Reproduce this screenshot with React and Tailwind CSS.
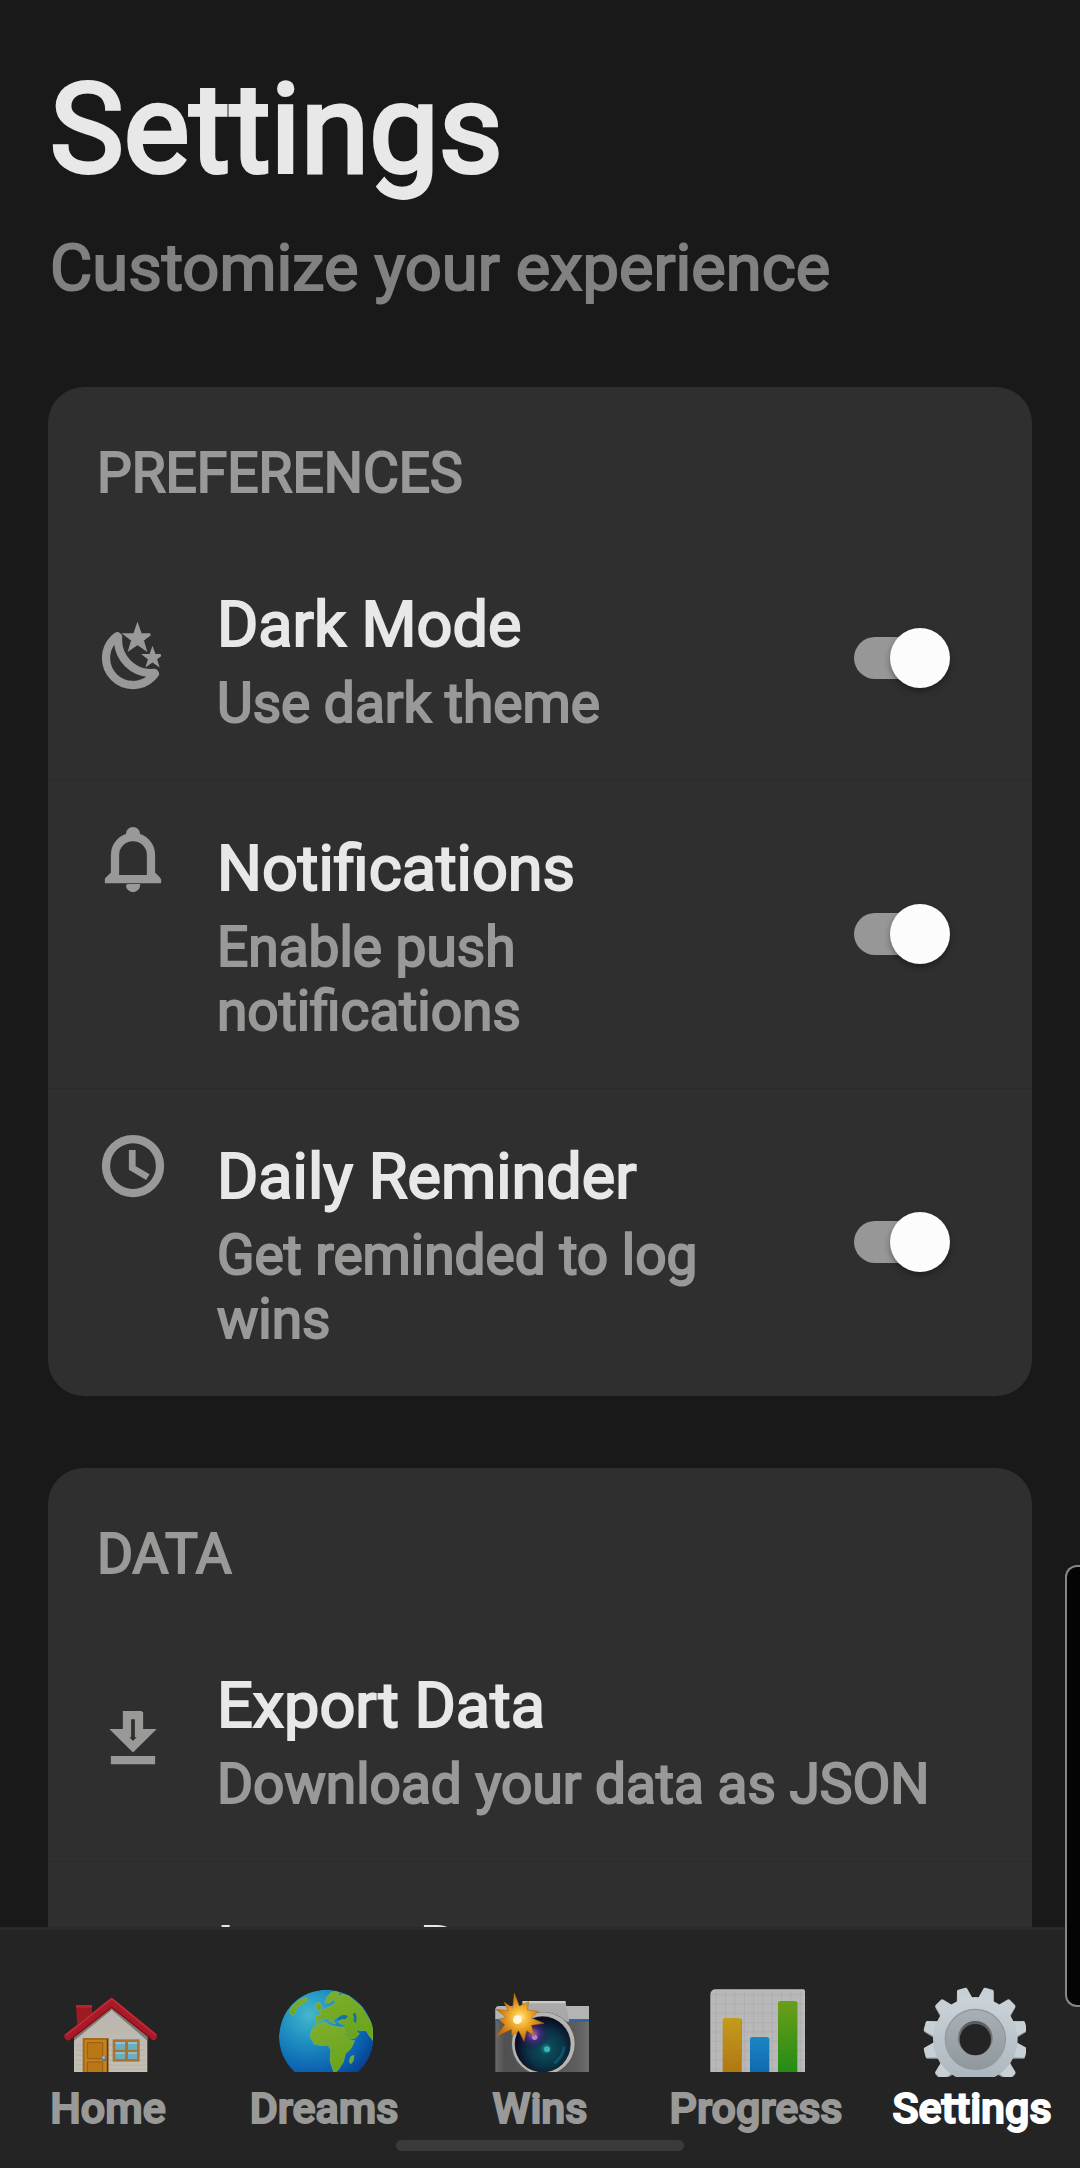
const ICONS = {
  night:
    "M17.75,4.09L15.22,6.03L16.13,9.09L13.5,7.28L10.87,9.09L11.78,6.03L9.25,4.09L12.44,4L13.5,1L14.56,4L17.75,4.09M21.25,11L19.61,12.25L20.2,14.23L18.5,13.06L16.8,14.23L17.39,12.25L15.75,11L17.81,10.95L18.5,9L19.19,10.95L21.25,11M18.97,15.95C19.8,15.87 20.69,17.05 20.16,17.8C19.84,18.25 19.5,18.67 19.08,19.07C15.17,23 8.84,23 4.94,19.07C1.03,15.17 1.03,8.83 4.94,4.93C5.34,4.53 5.76,4.17 6.21,3.85C6.96,3.32 8.14,4.21 8.06,5.04C7.79,7.9 8.75,10.87 10.95,13.06C13.14,15.26 16.1,16.22 18.97,15.95M17.33,17.97C14.5,17.81 11.7,16.64 9.53,14.5C7.36,12.31 6.2,9.5 6.04,6.68C3.23,9.82 3.34,14.64 6.35,17.66C9.37,20.67 14.19,20.78 17.33,17.97Z",
  bell: "M10 21H14C14 22.1 13.1 23 12 23S10 22.1 10 21M21 19V20H3V19L5 17V11C5 7.9 7 5.2 10 4.3V4C10 2.9 10.9 2 12 2S14 2.9 14 4V4.3C17 5.2 19 7.9 19 11V17L21 19M17 11C17 8.2 14.8 6 12 6S7 8.2 7 11V18H17V11Z",
  clock:
    "M12,20A8,8 0 0,0 20,12A8,8 0 0,0 12,4A8,8 0 0,0 4,12A8,8 0 0,0 12,20M12,2A10,10 0 0,1 22,12A10,10 0 0,1 12,22C6.47,22 2,17.5 2,12A10,10 0 0,1 12,2M12.5,7V12.25L17,14.92L16.25,16.15L11,13V7H12.5Z",
  download:
    "M13,5V11H14.17L12,13.17L9.83,11H11V5H13M15,3H9V9H5L12,16L19,9H15V3M19,18H5V20H19V18Z",
  upload:
    "M9,10V16H15V10H19L12,3L5,10H9M12,5.8L14.2,8H13V14H11V8H9.8L12,5.8M19,18H5V20H19V18Z",
};

function RowIcon({ name }) {
  return (
    <svg viewBox="0 0 24 24" aria-hidden="true" className="size-[72px] fill-[#999998] stroke-[#999998]" strokeWidth="0.75">
      <path d={ICONS[name]} />
    </svg>
  );
}

function Switch({ id }) {
  return (
    <span className="relative mr-[82px] flex h-[60px] w-24 shrink-0 items-center self-center">
      <input
        id={id}
        type="checkbox"
        role="switch"
        defaultChecked
        className="peer absolute inset-0 z-10 m-0 size-full cursor-pointer appearance-none"
      />
      <span className="h-[42px] w-[84px] rounded-full bg-[#979797]" />
      <span className="absolute right-0 size-[60px] rounded-full bg-[#fcfcfc] shadow-[0_3px_6px_rgba(0,0,0,0.35)]" />
    </span>
  );
}

function RowText({ title, description }) {
  return (
    <>
      <span className="block text-[63px] leading-22 text-[#e8e8e8] [-webkit-text-stroke:2px]">{title}</span>
      <span className="mt-0.5 block text-[55px] leading-16 text-[#999998] [-webkit-text-stroke:2px]">{description}</span>
    </>
  );
}

function SwitchRow({ icon, title, description, center }) {
  const id = "switch-" + icon;
  return (
    <li className="flex border-[#2a2a2a] pt-11 pb-[45px] pl-[49px] not-last:border-b">
      <span className={center ? "mr-12 flex self-center" : "-mt-[3px] mr-12 flex self-start"}>
        <RowIcon name={icon} />
      </span>
      <label htmlFor={id} className="mr-12 min-w-0 flex-1">
        <RowText title={title} description={description} />
      </label>
      <Switch id={id} />
    </li>
  );
}

function ActionRow({ icon, title, description }) {
  return (
    <li className="border-[#2a2a2a] not-last:border-b">
      <button type="button" className="flex w-full items-center pt-11 pb-[45px] pl-[49px] text-left">
        <span className="mr-12 flex">
          <RowIcon name={icon} />
        </span>
        <span className="min-w-0 flex-1">
          <RowText title={title} description={description} />
        </span>
      </button>
    </li>
  );
}

function Card({ title, children }) {
  return (
    <section className="rounded-[36px] bg-[#2f2f2f]">
      <h2 className="px-[49px] pt-[54px] pb-8 text-[55px] leading-16 text-[#999998] [-webkit-text-stroke:2px]">{title}</h2>
      <ul>{children}</ul>
    </section>
  );
}

function HomeArt() {
  return (
    <svg viewBox="162 210 324 276" className="h-[92px] w-[108px]" aria-hidden="true">
      <defs>
        <linearGradient id="wall" x1="0" y1="0" x2="0" y2="1">
          <stop offset="0" stopColor="#b9b5af" />
          <stop offset="1" stopColor="#c4c0b4" />
        </linearGradient>
      </defs>
      <path d="M228 285h48v40l-44 30z" fill="#9c1a22" />
      <path d="M228 285h48v8h-48z" fill="#b62430" />
      <path d="M222 370L335 285L442 370V490H222z" fill="url(#wall)" />
      <path d="M226 405h212M226 420h212M226 435h212M226 450h212M226 465h212M226 478h212" stroke="#aaa69c" strokeWidth="1.5" />
      <path d="M222 392L335 300L442 392V376L335 288L222 376z" fill="#7f7a75" />
      <path d="M335 262L193 374Q190 384 200 391Q207 392 214 388L335 294L452 386Q462 395 468 388Q473 380 470 372z" fill="#a91a28" />
      <path d="M335 266L198 375M335 266L466 374" stroke="#c22e3c" strokeWidth="4" fill="none" />
      <path d="M335 292L212 388M335 292L454 386" stroke="#7f1019" strokeWidth="4" fill="none" />
      <path d="M248 384h77v106h-77z" fill="#a8690f" />
      <path d="M254 390h65v100h-65z" fill="#c08224" />
      <path d="M262 398h46v48h-46zM262 456h46v34h-46z" fill="#b97716" stroke="#995c0c" strokeWidth="3" />
      <path d="M321 386h4v104h-4z" fill="#5e3c12" />
      <circle cx="313" cy="446" r="8" fill="#6c7278" />
      <circle cx="311" cy="443" r="4" fill="#b5babd" />
      <path d="M338 388h81v67h-81z" fill="#a87436" />
      <path d="M346 396h29v23h-29zM384 396h27v23h-27zM346 427h29v20h-29zM384 427h27v20h-27z" fill="#6caec0" />
      <path d="M346 396h29v6h-29zM384 396h27v6h-27zM346 427h29v5h-29zM384 427h27v5h-27z" fill="#8ec4ce" />
    </svg>
  );
}

function GlobeArt() {
  return (
    <svg viewBox="810 210 324 276" className="h-[92px] w-[108px]" aria-hidden="true">
      <defs>
        <radialGradient id="sea" cx="0.32" cy="0.26" r="0.8">
          <stop offset="0" stopColor="#45b8cc" />
          <stop offset="0.4" stopColor="#1c8cc0" />
          <stop offset="0.8" stopColor="#0a5cae" />
          <stop offset="1" stopColor="#083f8e" />
        </radialGradient>
        <linearGradient id="land" x1="0" y1="0" x2="0.3" y2="1">
          <stop offset="0" stopColor="#7fae2e" />
          <stop offset="1" stopColor="#6aa51c" />
        </linearGradient>
        <clipPath id="globe">
          <path d="M810 210H1119V486H810z" />
        </clipPath>
        <clipPath id="disc">
          <circle cx="979" cy="381" r="142" />
        </clipPath>
      </defs>
      <g clipPath="url(#globe)">
        <g clipPath="url(#disc)">
          <circle cx="979" cy="381" r="142" fill="url(#sea)" />
          <g fill="url(#land)" stroke="#8fb850" strokeWidth="1.5">
            <path d="M868 308L875 290L895 272L918 262L922 272L905 284L892 292L885 308L880 318z" />
            <path d="M975 278L980 262L992 248L1004 243L1018 248L1014 262L1024 252L1045 256L1085 290L1119 345V392L1108 378L1098 362L1080 362L1066 358L1078 372L1066 384L1050 388L1036 362L1028 352L1040 342L1026 344L1014 336L1022 326L1010 322L1000 330L1006 342L992 336L982 324L966 330L948 338L946 318L962 314L958 304L976 296L992 288L1006 278L1000 268L992 278z" />
            <path d="M930 378L936 358L952 342L976 336L990 346L1012 350L1030 352L1038 372L1048 390L1064 392L1054 414L1036 432L1030 456L1016 478L1006 488L1000 484L990 452L992 420L984 406L960 406L942 402z" />
            <path d="M1052 440L1062 436L1060 452L1052 462L1048 454z" />
            <path d="M948 282L958 276L966 292L960 302L950 300z" />
          </g>
          <path d="M1012 326q14-16 32-8l-8 10q-12-4-20 4zM1058 312l8-4 4 14-2 18-8-6 2-12z" fill="#1470ac" />
        </g>
      </g>
    </svg>
  );
}

function CameraArt() {
  return (
    <svg viewBox="258 210 324 276" className="h-[92px] w-[108px]" aria-hidden="true">
      <defs>
        <linearGradient id="body" x1="0" y1="0" x2="1" y2="0">
          <stop offset="0" stopColor="#6a6a6a" />
          <stop offset="0.1" stopColor="#505050" />
          <stop offset="0.85" stopColor="#5c5c5c" />
          <stop offset="1" stopColor="#6e6e6e" />
        </linearGradient>
        <radialGradient id="lens" cx="0.56" cy="0.58" r="0.55">
          <stop offset="0" stopColor="#1f8f96" />
          <stop offset="0.2" stopColor="#0b4a58" />
          <stop offset="0.6" stopColor="#0a3346" />
          <stop offset="1" stopColor="#0b0b24" />
        </radialGradient>
        <radialGradient id="flare">
          <stop offset="0" stopColor="#a868c8" />
          <stop offset="0.4" stopColor="#4d2a80" stopOpacity="0.8" />
          <stop offset="1" stopColor="#1c1048" stopOpacity="0" />
        </radialGradient>
        <radialGradient id="flash">
          <stop offset="0" stopColor="#fff3c4" />
          <stop offset="0.2" stopColor="#fcca4c" />
          <stop offset="0.6" stopColor="#e2931c" />
          <stop offset="1" stopColor="#c06c12" />
        </radialGradient>
      </defs>
      <path d="M286 300Q286 288 298 288H567V490H286z" fill="url(#body)" />
      <path d="M286 300Q286 288 298 288H567V328H286z" fill="#b4b4b4" />
      <path d="M286 328h281v7H286z" fill="#2c62a4" />
      <path d="M368 273H496L508 335H360z" fill="#a9a9a9" />
      <path d="M368 273H496L497 280H367z" fill="#cacaca" />
      <circle cx="430" cy="403" r="97" fill="#585858" />
      <circle cx="430" cy="401" r="94" fill="#b5b5b3" />
      <circle cx="428" cy="403" r="84" fill="#222" />
      <circle cx="428" cy="403" r="82" fill="url(#lens)" />
      <circle cx="400" cy="372" r="50" fill="url(#flare)" />
      <circle cx="404" cy="382" r="8" fill="#b583cf" />
      <circle cx="441" cy="418" r="9" fill="#3ab5b5" />
      <path d="M462 460Q490 440 492 410" stroke="#146a78" strokeWidth="8" fill="none" opacity="0.6" />
      <path
        d="M343 249L358 288L386 275L382 300L416 304L394 324L432 340L394 346L404 378L380 362L372 394L356 362L336 378L334 358L289 379L314 344L296 328L318 322L288 298L324 302L312 276L338 294z"
        fill="url(#flash)"
        stroke="#a9640f"
        strokeWidth="1.5"
      />
      <circle cx="352" cy="329" r="13" fill="#fff6dc" />
    </svg>
  );
}

function ChartArt() {
  return (
    <svg viewBox="126 210 324 276" className="h-[92px] w-[108px]" aria-hidden="true">
      <defs>
        <linearGradient id="gold" x1="0" y1="0" x2="0" y2="1">
          <stop offset="0" stopColor="#c49c1c" />
          <stop offset="1" stopColor="#b07612" />
        </linearGradient>
        <linearGradient id="blue" x1="0" y1="0" x2="0" y2="1">
          <stop offset="0" stopColor="#1c86c4" />
          <stop offset="1" stopColor="#0f68ac" />
        </linearGradient>
        <linearGradient id="green" x1="0" y1="0" x2="0" y2="1">
          <stop offset="0" stopColor="#6c9e1a" />
          <stop offset="1" stopColor="#218c14" />
        </linearGradient>
      </defs>
      <path d="M151 490V255Q151 238 168 238H430Q435 238 435 244V490z" fill="#bfbfbf" />
      <path d="M154 490V257Q154 242 169 242H432V490z" fill="#b8b8b8" />
      <path
        d="M169 242V490M197 242V490M225 242V490M253 242V490M281 242V490M309 242V490M337 242V490M365 242V490M393 242V490M421 242V490M154 254H435M154 282H435M154 310H435M154 338H435M154 366H435M154 394H435M154 422H435M154 450H435M154 478H435"
        stroke="#a4a4a6"
        strokeWidth="1.5"
      />
      <path d="M192 328h54v162h-54zM275 385h54v105h-54zM358 276h55v214h-55z" fill="#777" opacity="0.7" />
      <path d="M188 490V330Q188 324 194 324H237Q243 324 243 330V490z" fill="url(#gold)" />
      <path d="M270 490V387Q270 381 276 381H321Q327 381 327 387V490z" fill="url(#blue)" />
      <path d="M354 490V279Q354 273 360 273H405Q411 273 411 279V490z" fill="url(#green)" />
    </svg>
  );
}

function GearArt() {
  const teeth = Array.from({ length: 12 }, (_, i) => i * 30 + 15);
  return (
    <svg viewBox="774 210 324 291" className="h-[97px] w-[108px]" aria-hidden="true">
      <defs>
        <linearGradient id="steel" gradientUnits="userSpaceOnUse" x1="0" y1="230" x2="0" y2="501">
          <stop offset="0" stopColor="#ced7dc" />
          <stop offset="1" stopColor="#adb8be" />
        </linearGradient>
        <linearGradient id="hub" x1="0" y1="0" x2="0" y2="1">
          <stop offset="0" stopColor="#a9b0b4" />
          <stop offset="1" stopColor="#8f989d" />
        </linearGradient>
        <linearGradient id="bore" x1="0" y1="0" x2="0" y2="1">
          <stop offset="0" stopColor="#555b5e" />
          <stop offset="1" stopColor="#8b9296" />
        </linearGradient>
      </defs>
      <g fill="#87949c">
        {teeth.map((a) => (
          <path key={a} d="M918 276L930 235Q931 231 935 231H957Q961 231 962 235L974 276z" transform={`translate(0 3) rotate(${a} 946 388)`} />
        ))}
      </g>
      <g fill="#c6d0d5">
        {teeth.map((a) => (
          <path key={a} d="M920 276L930 235Q931 231 935 231H957Q961 231 962 235L972 276z" transform={`rotate(${a} 946 388)`} />
        ))}
      </g>
      <circle cx="946" cy="388" r="127" fill="url(#steel)" />
      <circle cx="946" cy="388" r="92" fill="#8c969c" />
      <circle cx="946" cy="389" r="89" fill="url(#hub)" />
      <circle cx="946" cy="385" r="52" fill="url(#bore)" />
      <circle cx="946" cy="389" r="47" fill="#242424" />
    </svg>
  );
}

const TABS = [
  { label: "Home", Art: HomeArt },
  { label: "Dreams", Art: GlobeArt },
  { label: "Wins", Art: CameraArt },
  { label: "Progress", Art: ChartArt },
  { label: "Settings", Art: GearArt, active: true },
];

export default function App() {
  return (
    <div className="relative flex h-screen flex-col overflow-hidden bg-[#191919] font-['Roboto',sans-serif]">
      <main className="min-h-0 flex-1 overflow-hidden px-12 pt-[52px]">
        <header className="mb-[76px] pl-0.5">
          <h1 className="text-[124px] leading-[156px] text-[#e8e8e8] [-webkit-text-stroke:4px]">Settings</h1>
          <p className="mt-[17px] text-[65px] leading-[86px] text-[#818180] [-webkit-text-stroke:2px]">Customize your experience</p>
        </header>
        <div className="flex flex-col gap-[72px]">
          <Card title="PREFERENCES">
            <SwitchRow icon="night" title="Dark Mode" description="Use dark theme" center />
            <SwitchRow icon="bell" title="Notifications" description="Enable push notifications" />
            <SwitchRow icon="clock" title="Daily Reminder" description="Get reminded to log wins" />
          </Card>
          <Card title="DATA">
            <ActionRow icon="download" title="Export Data" description="Download your data as JSON" />
            <ActionRow icon="upload" title="Import Data" description="Restore from backup" />
          </Card>
        </div>
      </main>

      <nav className="shrink-0 border-t-3 border-[#2a2a2a] bg-[#242424] pt-[50px] pb-[17px]">
        <ul className="grid grid-cols-5">
          {TABS.map(({ label, Art, active }) => (
            <li key={label}>
              <a
                href={"#" + label.toLowerCase()}
                aria-current={active ? "page" : undefined}
                className="flex flex-col items-center text-[#999998] aria-[current=page]:text-white"
              >
                <span className="flex h-[97px] items-start">
                  <Art />
                </span>
                <span className="mt-[5px] text-[43px] leading-13 font-medium [-webkit-text-stroke:2px]">{label}</span>
              </a>
            </li>
          ))}
        </ul>
        <div className="mx-auto mt-1.5 h-[11px] w-72 rounded-full bg-[#3b3b3b]" />
      </nav>

      <div className="absolute right-0 bottom-[161px] h-[442px] w-[15px] rounded-l-xl border-2 border-r-0 border-[#858585] bg-[#040404]" />
    </div>
  );
}
